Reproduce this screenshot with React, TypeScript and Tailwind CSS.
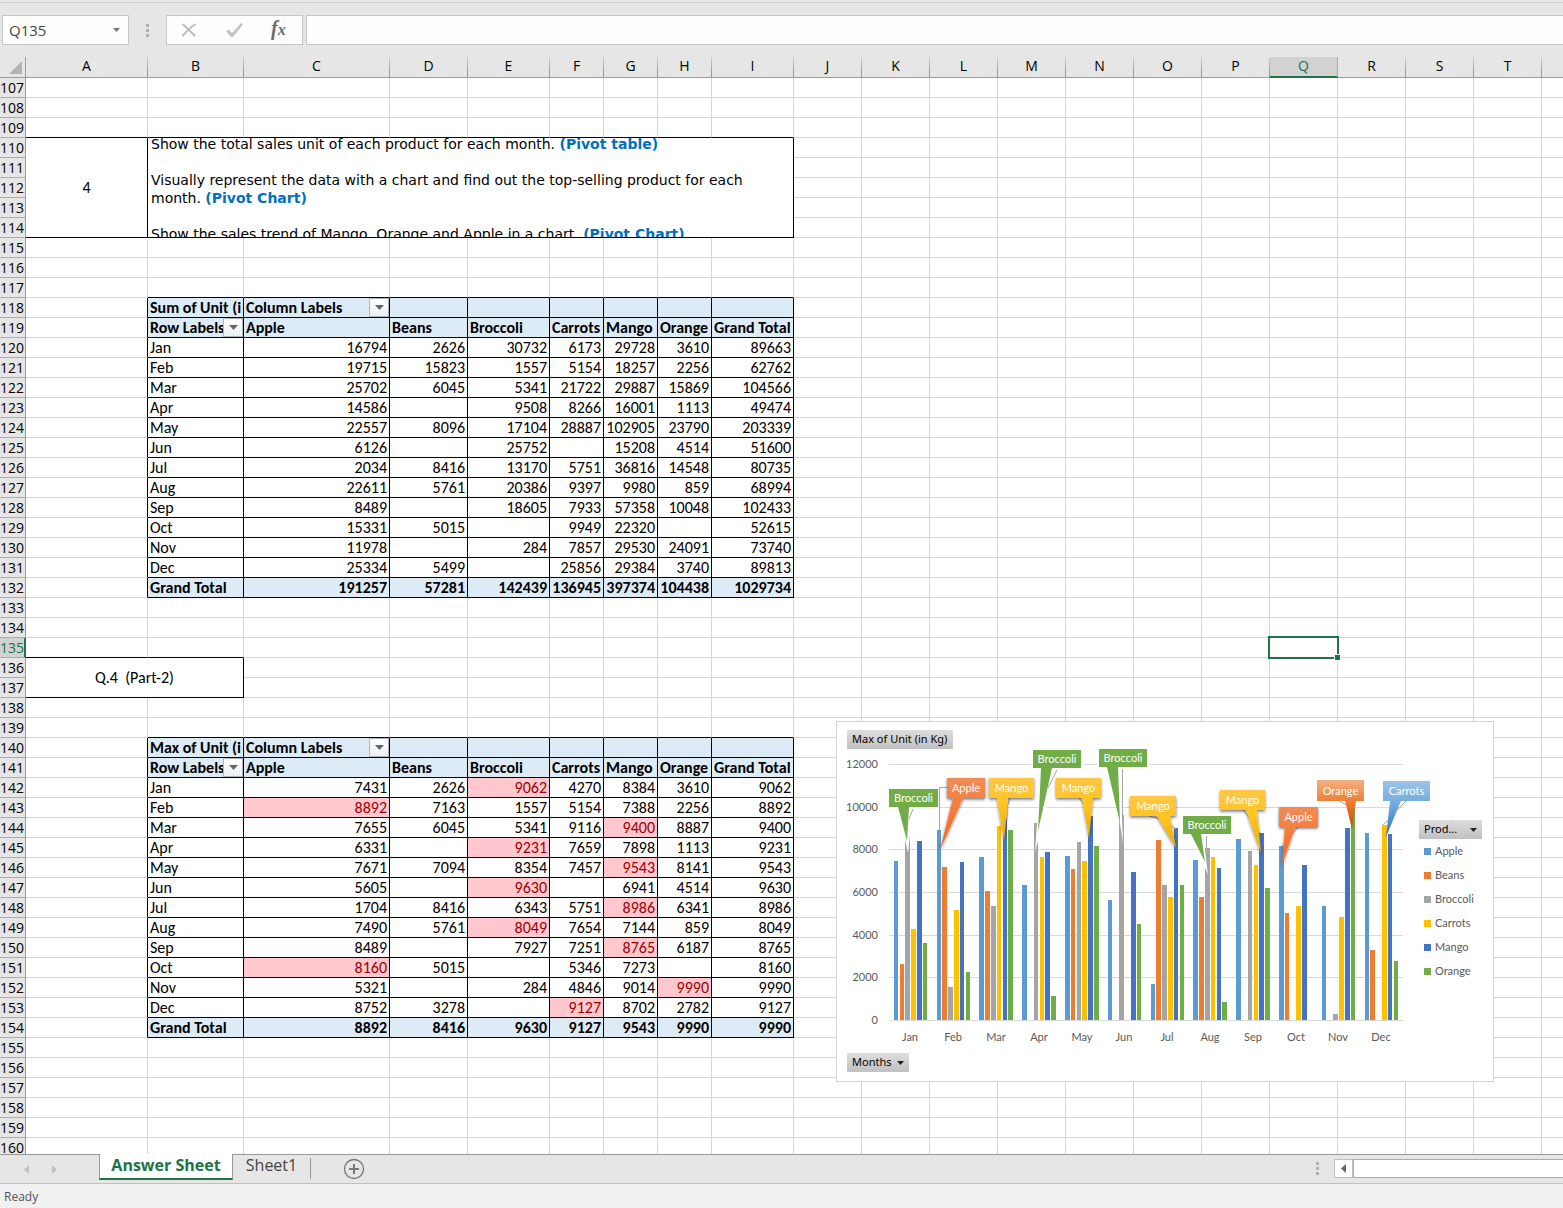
import React from "react";

const COLUMNS = "ABCDEFGHIJKLMNOPQRST".split("");
const WIDTHS = ["w-[122px]", "w-[96px]", "w-[146px]", "w-[78px]", "w-[82px]", "w-[54px]", "w-[54px]", "w-[54px]", "w-[82px]"];
const FIRST_ROW = 107;
const LAST_ROW = 160;
const ACTIVE = { column: "Q", row: 135 };

const PRODUCTS = ["Apple", "Beans", "Broccoli", "Carrots", "Mango", "Orange"];
const MONTHS = ["Jan", "Feb", "Mar", "Apr", "May", "Jun", "Jul", "Aug", "Sep", "Oct", "Nov", "Dec"];

type Num = number | null;
type Pivot = { top: number; title: string; rows: Num[][]; highlight: string[] };

const _ = null;
const SUM: Pivot = {
  top: 118,
  title: "Sum of Unit (i",
  rows: [
    [16794, 2626, 30732, 6173, 29728, 3610, 89663],
    [19715, 15823, 1557, 5154, 18257, 2256, 62762],
    [25702, 6045, 5341, 21722, 29887, 15869, 104566],
    [14586, _, 9508, 8266, 16001, 1113, 49474],
    [22557, 8096, 17104, 28887, 102905, 23790, 203339],
    [6126, _, 25752, _, 15208, 4514, 51600],
    [2034, 8416, 13170, 5751, 36816, 14548, 80735],
    [22611, 5761, 20386, 9397, 9980, 859, 68994],
    [8489, _, 18605, 7933, 57358, 10048, 102433],
    [15331, 5015, _, 9949, 22320, _, 52615],
    [11978, _, 284, 7857, 29530, 24091, 73740],
    [25334, 5499, _, 25856, 29384, 3740, 89813],
    [191257, 57281, 142439, 136945, 397374, 104438, 1029734],
  ],
  highlight: [],
};
const MAX: Pivot = {
  top: 140,
  title: "Max of Unit (i",
  rows: [
    [7431, 2626, 9062, 4270, 8384, 3610, 9062],
    [8892, 7163, 1557, 5154, 7388, 2256, 8892],
    [7655, 6045, 5341, 9116, 9400, 8887, 9400],
    [6331, _, 9231, 7659, 7898, 1113, 9231],
    [7671, 7094, 8354, 7457, 9543, 8141, 9543],
    [5605, _, 9630, _, 6941, 4514, 9630],
    [1704, 8416, 6343, 5751, 8986, 6341, 8986],
    [7490, 5761, 8049, 7654, 7144, 859, 8049],
    [8489, _, 7927, 7251, 8765, 6187, 8765],
    [8160, 5015, _, 5346, 7273, _, 8160],
    [5321, _, 284, 4846, 9014, 9990, 9990],
    [8752, 3278, _, 9127, 8702, 2782, 9127],
    [8892, 8416, 9630, 9127, 9543, 9990, 9990],
  ],
  highlight: ["0-2", "1-0", "2-4", "3-2", "4-4", "5-2", "6-4", "7-2", "8-4", "9-0", "10-5", "11-3"],
};

function pivotAt(col: number, row: number): Pivot | undefined {
  if (col < 1 || col > 8) return undefined;
  return [SUM, MAX].find((p) => row >= p.top && row <= p.top + 14);
}

function FilterButton({ label }: { label: string }) {
  return (
    <button
      type="button"
      aria-label={label}
      className="absolute top-0 right-0 flex h-[19px] w-5 items-center justify-center border border-[#b0b6c0] bg-linear-to-b from-white to-[#eceff3]"
    >
      <svg width="9" height="5" viewBox="0 0 9 5">
        <path d="M0 0h9L4.5 5z" fill="#666" />
      </svg>
    </button>
  );
}

function pivotCell(p: Pivot, col: number, row: number) {
  const r = row - p.top;
  const head = "bg-[#ddebf7] font-bold";
  if (r === 0) {
    return { cls: head, text: col === 1 ? p.title : col === 2 ? "Column Labels" : "", filter: col === 2 };
  }
  if (r === 1) {
    const text = col === 1 ? "Row Labels" : col === 8 ? "Grand Total" : PRODUCTS[col - 2];
    return { cls: head, text, filter: col === 1 };
  }
  const total = r === 14;
  if (col === 1) return { cls: total ? head : "bg-white", text: total ? "Grand Total" : MONTHS[r - 2], filter: false };
  const value = p.rows[r - 2][col - 2];
  const hot = p.highlight.includes(`${r - 2}-${col - 2}`);
  const tone = total ? head : hot ? "bg-[#ffc7ce] text-[#9c0006]" : "bg-white";
  return { cls: `${tone} text-right`, text: value === null ? "" : String(value), filter: false };
}

function Cell({ col, row }: { col: number; row: number }) {
  if (row === 110 && col === 0) {
    return (
      <td rowSpan={5} className="border-r border-b border-black text-center">4</td>
    );
  }
  if (row === 110 && col === 1) {
    return (
      <td rowSpan={5} colSpan={8} className="border-r border-b border-black p-0 align-top">
        <div className="h-[99px] overflow-hidden pl-[3px] font-['Verdana','DejaVu_Sans',sans-serif] text-sm leading-[18px]">
          <div className="-mt-[3px]">
            <p>Show the total sales unit of each product for each month. <b className="text-[#0070c0]">(Pivot table)</b></p>
            <br />
            <p>
              Visually represent the data with a chart and find out the top-selling product for each
              <br />
              month. <b className="text-[#0070c0]">(Pivot Chart)</b>
            </p>
            <br />
            <p className="whitespace-nowrap">Show the sales trend of Mango, Orange and Apple in a chart. <b className="text-[#0070c0]">(Pivot Chart)</b></p>
          </div>
        </div>
      </td>
    );
  }
  if (row >= 110 && row <= 114 && col <= 8) return null;
  if (row === 136 && col === 0) {
    return (
      <td rowSpan={2} colSpan={2} className="border-r border-b border-black text-center whitespace-pre">{"Q.4  (Part-2)"}</td>
    );
  }
  if ((row === 136 || row === 137) && col <= 1) return null;

  const p = pivotAt(col, row);
  const blackRight = p || pivotAt(col + 1, row);
  const blackBottom = p || pivotAt(col, row + 1) || (row === 109 && col <= 8) || (row === 135 && col <= 1);
  const edges = `border-r border-b ${blackRight ? "border-r-black" : "border-r-[#d4d4d4]"} ${blackBottom ? "border-b-black" : "border-b-[#d4d4d4]"}`;

  if (p) {
    const c = pivotCell(p, col, row);
    const spill = col === 8 && row === p.top + 1;
    return (
      <td className={`relative p-0 ${edges} ${c.cls}`}>
        <div className={`h-[19px] px-0.5 whitespace-nowrap ${spill ? "overflow-visible" : "overflow-hidden"}`}>{c.text}</div>
        {c.filter && <FilterButton label={`Filter ${c.text}`} />}
      </td>
    );
  }
  if (row === ACTIVE.row && COLUMNS[col] === ACTIVE.column) {
    return (
      <td className={`relative p-0 ${edges}`}>
        <div className="absolute -inset-0.5 border-2 border-[#217346]" />
        <div className="absolute -right-[4px] -bottom-[4px] size-[7px] border border-white bg-[#217346]" />
      </td>
    );
  }
  return <td className={`p-0 ${edges}`} />;
}

function Grid() {
  const rows = Array.from({ length: LAST_ROW - FIRST_ROW + 1 }, (_v, i) => FIRST_ROW + i);
  return (
    <table className="w-full min-w-[1560px] table-fixed border-separate border-spacing-0 font-['Carlito','Lato',sans-serif] text-base leading-5 text-black">
      <colgroup>
        <col className="w-[26px]" />
        {COLUMNS.map((c, i) => (
          <col key={c} className={WIDTHS[i] ?? "w-[68px]"} />
        ))}
        <col />
      </colgroup>
      <thead>
        <tr className="h-[21px] font-['Open_Sans',sans-serif] text-sm leading-[18px]">
          <th className="border-r border-b border-[#9b9b9b] bg-[#e6e6e6] p-0">
            <svg className="ml-2" width="14" height="13" viewBox="0 0 14 13"><path d="M14 0v13H1z" fill="#b4b4b4" /></svg>
          </th>
          {COLUMNS.map((c) => (
            <th
              key={c}
              scope="col"
              className={
                c === ACTIVE.column
                  ? "border-r border-b-2 border-r-[#ababab] border-b-[#217346] bg-[#d2d2d2] p-0 align-top font-normal text-[#217346]"
                  : "border-b border-[#9b9b9b] bg-[#e6e6e6] bg-linear-to-b from-[#d0d0d0] to-[#8c8c8c] bg-[length:1px_100%] bg-right bg-no-repeat p-0 pr-px align-top font-normal"
              }
            >
              {c}
            </th>
          ))}
          <td className="border-b border-[#9b9b9b] bg-[#e6e6e6] p-0" />
        </tr>
      </thead>
      <tbody>
        {rows.map((r) => (
          <tr key={r} className="h-5">
            <th
              scope="row"
              className={`border-b p-0 text-right font-['Open_Sans',sans-serif] text-sm leading-[19px] font-normal ${
                r === ACTIVE.row
                  ? "border-r-2 border-r-[#217346] border-b-[#ababab] bg-[#d2d2d2] pr-px text-[#217346]"
                  : "border-r border-r-[#9b9b9b] border-b-[#ababab] bg-[#e6e6e6] pr-0.5"
              }`}
            >
              {r}
            </th>
            {COLUMNS.map((c, i) => (
              <Cell key={c} col={i} row={r} />
            ))}
            <td className="border-b border-[#d4d4d4] p-0" />
          </tr>
        ))}
      </tbody>
    </table>
  );
}

const SERIES = ["#5b9bd5", "#ed7d31", "#a5a5a5", "#ffc000", "#4472c4", "#70ad47"];
const LEGEND = ["bg-[#5b9bd5]", "bg-[#ed7d31]", "bg-[#a5a5a5]", "bg-[#ffc000]", "bg-[#4472c4]", "bg-[#70ad47]"];
const BASE_Y = 299;
const SCALE = 256 / 12000;
const PLOT_X = 53;
const STEP = 42.8;

type Callout = {
  text: string;
  fill: string;
  box: [number, number, number, number];
  base: [number, number];
  tip: [number, number];
  leader: string;
  halo?: string;
  shadow?: boolean;
};

const CALLOUTS: Callout[] = [
  { text: "Broccoli", fill: "green", box: [53, 68, 49, 18], base: [62, 73], tip: [71, 120], leader: "M77 88L73 98", halo: "62,86 77,86 72,132" },
  { text: "Apple", fill: "apple", box: [111, 57, 38, 20], base: [117, 127], tip: [104, 129], leader: "M111 66.500H103.500V109", shadow: true },
  { text: "Mango", fill: "mango", box: [153, 57, 45, 20], base: [161, 172], tip: [168, 120], leader: "M174 77L171 86V98", shadow: true },
  { text: "Broccoli", fill: "green", box: [197, 29, 48, 18], base: [205, 216], tip: [202, 110], leader: "M221 49L212 67", halo: "205,47 221,47 199,131" },
  { text: "Mango", fill: "mango", box: [220, 57, 45, 20], base: [246, 257], tip: [253, 117], leader: "M243 77L248 84L254 95", shadow: true },
  { text: "Broccoli", fill: "green", box: [263, 28, 48, 18], base: [271, 282], tip: [284, 102], leader: "M286.500 48V94", halo: "275,46 284,46 287,122" },
  { text: "Mango", fill: "mango", box: [294, 75, 46, 20], base: [321, 334], tip: [340, 127], leader: "M313 95L324 98L340 108", shadow: true },
  { text: "Broccoli", fill: "green", box: [347, 95, 48, 18], base: [355, 365], tip: [369, 141], leader: "M370.500 115V127", halo: "356,113 367,113 372,154" },
  { text: "Mango", fill: "mango", box: [384, 69, 45, 20], base: [410, 421], tip: [425, 132], leader: "M407 89L412 95L424 112", shadow: true },
  { text: "Apple", fill: "apple", box: [443, 86, 39, 20], base: [449, 459], tip: [446, 144], leader: "M462 106L446 125", shadow: true },
  { text: "Orange", fill: "orange", box: [481, 59, 47, 21], base: [509, 520], tip: [516, 108], leader: "M504 80L510 84" },
  { text: "Carrots", fill: "carrots", box: [547, 60, 47, 20], base: [554, 565], tip: [550, 116], leader: "M570 80L547 104" },
];

const GRADIENTS: [string, string, string, string][] = [
  ["green", "#70ad47", "#70ad47", "#70ad47"],
  ["apple", "#f18c55", "#f67b38", "#f26a1b"],
  ["mango", "#ffc746", "#ffc320", "#e5ac00"],
  ["orange", "#f4b183", "#ed7d31", "#b9500c"],
  ["carrots", "#9dc3e6", "#6fa8dc", "#2e75b6"],
];

function PivotChart() {
  return (
    <figure className="absolute top-[664px] left-[836px] flex h-[361px] w-[658px] flex-col border border-[#d4d4d4] bg-white pt-2 font-['Lato',sans-serif] text-[11px] text-[#595959]">
      <button type="button" className="ml-2.5 h-[19px] w-[106px] shrink-0 bg-linear-to-b from-[#dedede] to-[#c0c0c0] pl-[5px] text-left font-['Noto_Sans',sans-serif] text-[11px] whitespace-nowrap text-black">
        Max of Unit (in Kg)
      </button>
      <div className="flex h-[304px] shrink-0">
        <svg className="shrink-0 overflow-visible" width="582" height="304" viewBox="1 28 582 304" fontFamily="Lato, sans-serif" fontSize="11">
          <defs>
            {GRADIENTS.map(([id, a, b, c]) => (
              <linearGradient key={id} id={id} x1="0" y1="0" x2="0" y2="1">
                <stop offset="0" stopColor={a} />
                <stop offset="0.45" stopColor={b} />
                <stop offset="1" stopColor={c} />
              </linearGradient>
            ))}
            <filter id="shadow" x="-20%" y="-20%" width="140%" height="150%">
              <feDropShadow dx="0" dy="1.500" stdDeviation="1.500" floodColor="#000" floodOpacity="0.55" />
            </filter>
          </defs>
          {[0, 2000, 4000, 6000, 8000, 10000, 12000].map((v) => {
            const y = Math.round(BASE_Y - v * SCALE);
            return (
              <g key={v}>
                <rect x={PLOT_X} y={y} width="514" height="1" fill="#d9d9d9" />
                <text x="42" y={y + 4} textAnchor="end" fill="#595959">{v}</text>
              </g>
            );
          })}
          {MONTHS.map((m, i) => (
            <g key={m}>
              {SERIES.map((color, s) => {
                const v = MAX.rows[i][s];
                if (v === null) return null;
                const x0 = PLOT_X + 4.8 + i * STEP + s * 5.8;
                const left = Math.round(x0);
                const top = Math.round(BASE_Y - v * SCALE);
                return <rect key={s} x={left} y={top} width={Math.round(x0 + 4.6) - left} height={BASE_Y - top} fill={color} />;
              })}
              <text x={Math.round(PLOT_X + (i + 0.5) * STEP)} y="320" textAnchor="middle" fill="#595959">{m}</text>
            </g>
          ))}
          {CALLOUTS.map((c, i) => {
            const [x, y, w, h] = c.box;
            const b = y + h;
            return (
              <g key={i}>
                {c.halo && <polygon points={c.halo} fill="#fff" />}
                {c.halo && <rect x={x - 2} y={y - 2} width={w + 4} height={h + 4} fill="#fff" />}
                <path d={c.leader} fill="none" stroke="#a6a6a6" />
                <path
                  d={`M${x} ${y}h${w}v${h}H${c.base[1]}L${c.tip[0]} ${c.tip[1]}L${c.base[0]} ${b}H${x}z`}
                  fill={`url(#${c.fill})`}
                  filter={c.shadow ? "url(#shadow)" : undefined}
                />
                <text x={x + w / 2} y={y + h / 2 + 4} textAnchor="middle" fill="#fff">{c.text}</text>
              </g>
            );
          })}
        </svg>
        <div className="pt-[71px]">
          <button type="button" className="flex h-[19px] w-[63px] items-center justify-between bg-linear-to-b from-[#dedede] to-[#c0c0c0] px-[5px] font-['Noto_Sans',sans-serif] text-[11px] text-black">
            Prod...
            <svg width="7" height="4" viewBox="0 0 7 4"><path d="M0 0h7L3.500 4z" fill="#222" /></svg>
          </button>
          <ul>
            {PRODUCTS.map((name, i) => (
              <li key={name} className="flex h-6 items-center gap-1 pl-[5px]">
                <span className={`size-[7px] ${LEGEND[i]}`} />
                {name}
              </li>
            ))}
          </ul>
        </div>
      </div>
      <button type="button" className="ml-2.5 flex h-[19px] w-[62px] shrink-0 items-center justify-between bg-linear-to-b from-[#dedede] to-[#c0c0c0] px-[5px] font-['Noto_Sans',sans-serif] text-[11px] text-black">
        Months
        <svg width="7" height="4" viewBox="0 0 7 4"><path d="M0 0h7L3.500 4z" fill="#222" /></svg>
      </button>
    </figure>
  );
}

function Grip() {
  return (
    <span className="flex flex-col gap-0.5" aria-hidden="true">
      <i className="size-[3px] bg-[#b0b0b0]" />
      <i className="size-[3px] bg-[#b0b0b0]" />
      <i className="size-[3px] bg-[#b0b0b0]" />
    </span>
  );
}

function FormulaBar() {
  return (
    <div className="flex shrink-0 items-center border-t border-[#d0d0d0] py-3 pl-0.5">
      <div className="flex h-[30px] w-[127px] items-center border border-[#c6c6c6] bg-[#fdfdfd] pr-2">
        <input aria-label="Name box" defaultValue="Q135" className="w-full min-w-0 bg-transparent pl-1.5 text-[15px] text-[#444] outline-none" />
        <button type="button" aria-label="Named ranges">
          <svg width="7" height="4" viewBox="0 0 7 4"><path d="M0 0h7L3.500 4z" fill="#777" /></svg>
        </button>
      </div>
      <div className="flex w-[37px] justify-center"><Grip /></div>
      <div className="flex h-[30px] w-[137px] items-center border border-[#c6c6c6] bg-[#fdfdfd] pl-3.5">
        <button type="button" aria-label="Cancel" className="w-[45px]">
          <svg width="16" height="14" viewBox="0 0 16 14"><path d="M1.500 1C5 4 10 9 14 13M14.500 1C10 4 5 9 1.500 13" fill="none" stroke="#bdbdbd" strokeWidth="2" /></svg>
        </button>
        <button type="button" aria-label="Enter" className="w-[45px]">
          <svg width="17" height="14" viewBox="0 0 17 14"><path d="M0 8l2.500-1.500L6 10 15 0l2 1.500L7 14H5z" fill="#c3c3c3" /></svg>
        </button>
        <button type="button" aria-label="Insert function" className="font-['Liberation_Serif',serif] text-xl leading-5 font-bold text-[#6a6a6a] italic">
          f<span className="text-base">x</span>
        </button>
      </div>
      <input aria-label="Formula" className="ml-[3px] h-[30px] min-w-0 flex-1 border border-r-0 border-[#c6c6c6] bg-[#fdfdfd] px-2 outline-none" />
    </div>
  );
}

function SheetBar() {
  return (
    <nav className="flex h-[29px] shrink-0 border-t border-[#999]" aria-label="Sheets">
      <div className="flex w-[99px] items-center gap-[23px] pl-6">
        <button type="button" aria-label="Previous sheet"><svg width="5" height="9" viewBox="0 0 5 9"><path d="M5 0v9L0 4.500z" fill="#c0c0c0" /></svg></button>
        <button type="button" aria-label="Next sheet"><svg width="5" height="9" viewBox="0 0 5 9"><path d="M0 0v9l5-4.500z" fill="#c0c0c0" /></svg></button>
      </div>
      <button type="button" className="-mt-px h-[26px] w-[134px] border-x border-b-2 border-x-[#999] border-b-[#217346] bg-white pb-0.5 text-base leading-[22px] font-bold whitespace-nowrap text-[#217346]">
        Answer Sheet
      </button>
      <button type="button" className="h-[21px] w-[77px] pb-px text-base leading-5 text-[#444]">Sheet1</button>
      <i className="mt-[3px] h-[21px] w-px bg-[#999]" />
      <button type="button" aria-label="New sheet" className="ml-8 flex items-center">
        <svg width="22" height="22" viewBox="0 0 22 22" fill="none" stroke="#777"><circle cx="11" cy="11" r="9.500" strokeWidth="1.300" /><path d="M11 6v10M6 11h10" strokeWidth="2" /></svg>
      </button>
      <div className="ml-auto flex items-center pb-px">
        <Grip />
        <button type="button" aria-label="Scroll left" className="ml-[15px] flex h-[19px] w-[19px] items-center justify-center border border-[#c0c0c0] bg-white">
          <svg width="5" height="9" viewBox="0 0 5 9"><path d="M5 0v9L0 4.500z" fill="#666" /></svg>
        </button>
        <div className="h-[19px] w-[210px] border border-r-0 border-[#ababab] bg-white" />
      </div>
    </nav>
  );
}

export default function App() {
  return (
    <div className="flex h-screen flex-col overflow-hidden bg-[#e6e6e6] pt-0.5 font-['Open_Sans',sans-serif]">
      <FormulaBar />
      <main className="relative min-h-0 flex-1 overflow-hidden bg-white">
        <Grid />
        <PivotChart />
      </main>
      <SheetBar />
      <footer className="flex h-[25px] shrink-0 items-center border-t border-[#c0c0c0] bg-[#f0f0f0] pt-0.5 pl-1 text-xs text-[#555]">Ready</footer>
    </div>
  );
}
